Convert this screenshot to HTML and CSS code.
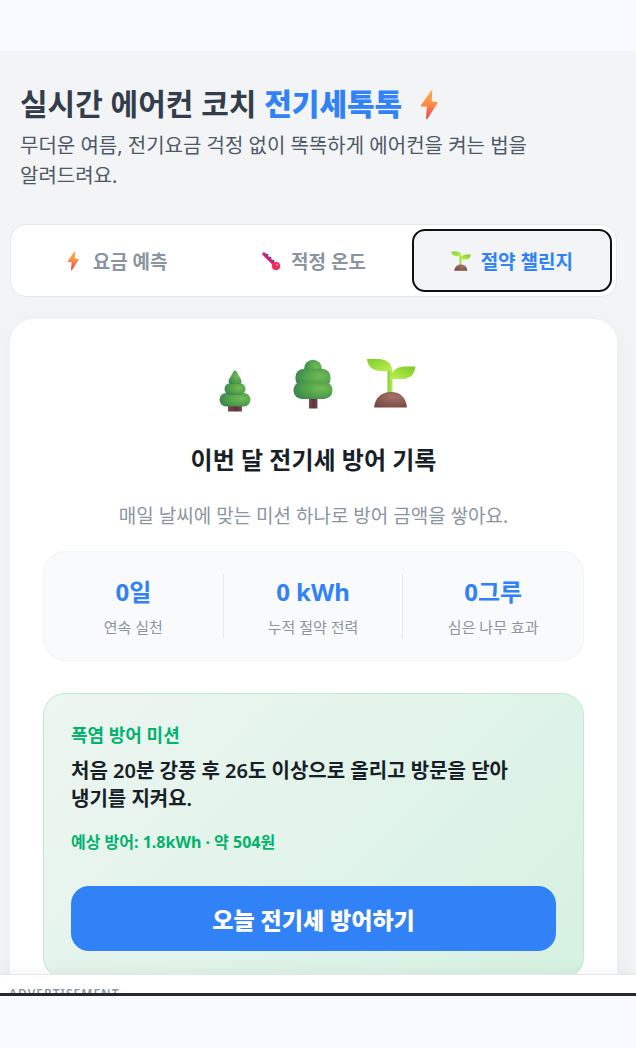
FILE: index.html
```
<!DOCTYPE html>
<html lang="ko">

<head>
    <meta charset="utf-8">
    <meta name="viewport" content="width=device-width, initial-scale=1.0">
    <title>전기세톡톡</title>
    <link rel="stylesheet" href="styles.css">
</head>

<body>

    <!-- shared icons -->
    <svg class="defs" width="0" height="0" aria-hidden="true">
        <defs>
            <linearGradient id="boltFill" x1="0" y1="0" x2="0" y2="1">
                <stop offset="0" stop-color="#fbb040" />
                <stop offset="0.5" stop-color="#fd8a46" />
                <stop offset="1" stop-color="#f4384f" />
            </linearGradient>
            <linearGradient id="leafFill" x1="0" y1="0" x2="1" y2="1">
                <stop offset="0" stop-color="#7fd02b" />
                <stop offset="1" stop-color="#bdf04f" />
            </linearGradient>
            <linearGradient id="leafFillRight" x1="0" y1="1" x2="1" y2="0">
                <stop offset="0" stop-color="#c0f250" />
                <stop offset="1" stop-color="#79c92a" />
            </linearGradient>
            <linearGradient id="stemFill" x1="0" y1="0" x2="1" y2="0">
                <stop offset="0" stop-color="#84cf35" />
                <stop offset="1" stop-color="#b9f04f" />
            </linearGradient>
            <radialGradient id="soilFill" cx="0.6" cy="0.3" r="0.8">
                <stop offset="0" stop-color="#a4706b" />
                <stop offset="1" stop-color="#77493f" />
            </radialGradient>
            <radialGradient id="treeFill" cx="0.7" cy="0.4" r="0.7">
                <stop offset="0" stop-color="#72bb55" />
                <stop offset="0.6" stop-color="#52a24b" />
                <stop offset="1" stop-color="#3f8852" />
            </radialGradient>
            <linearGradient id="trunkFill" x1="0" y1="0" x2="1" y2="0">
                <stop offset="0" stop-color="#7b4b4e" />
                <stop offset="0.6" stop-color="#5c3238" />
                <stop offset="1" stop-color="#7b4b52" />
            </linearGradient>
            <symbol id="bolt" viewBox="0 0 18 30">
                <path fill="url(#boltFill)" d="M11.3.5 1 15.2q-.7 1.3.8 1.3h5L6.1 28.4q.2 1.5 1.3.3L17.4 13.2q.6-1.4-.8-1.4h-4.9L12.3.9q-.1-1.1-1-.4Z" />
            </symbol>
            <symbol id="sprout" viewBox="0 0 50 50">
                <path fill="url(#stemFill)" d="M21.500 12h5v24h-5z" />
                <path fill="url(#leafFill)" d="M1 1h13q11 1 12.500 12H14Q2 12 1 1Z" />
                <path fill="url(#leafFillRight)" d="M49.500 8.500H37q-11 1-13 12.500h15q9.500-2 10.500-12.500Z" />
                <path fill="url(#soilFill)" d="M8 49.500q2-15 16.500-15.500T41 49.500Z" />
            </symbol>
            <symbol id="thermometer" viewBox="0 0 20 20">
                <path stroke="#b8dcff" stroke-width="5" stroke-linecap="round" d="m3 3 12 11" />
                <circle cx="15" cy="15" r="4.800" fill="#b8dcff" />
                <path stroke="#e0186f" stroke-width="3" stroke-linecap="round" d="m3 3 12 12" />
                <path stroke="#3b3a78" stroke-width="1.400" d="m5.500 4.500 1.600-1.300M8.500 7.500l1.600-1.300M11.500 10.500l1.600-1.300" />
                <circle cx="15" cy="15" r="4" fill="#f6275a" />
                <circle cx="16" cy="13.800" r="1" fill="#ff93a7" />
            </symbol>
            <symbol id="pine" viewBox="0 0 32 42">
                <path fill="url(#trunkFill)" d="M9 34h14v7.500H9z" />
                <rect x="0.500" y="23" width="31" height="13.500" rx="6.700" fill="url(#treeFill)" />
                <rect x="5.500" y="13" width="21" height="12" rx="6" fill="url(#treeFill)" />
                <path fill="url(#treeFill)" d="M14.500 1.500q1.500-2 3 0L22 9.500q1.500 4-2.500 4.500h-7q-4-.5-2.500-4.500Z" />
            </symbol>
            <symbol id="tree" viewBox="0 0 40 50">
                <path fill="url(#trunkFill)" d="M16 38h8.500v11.500H16z" />
                <circle cx="20" cy="9.500" r="8.800" fill="url(#treeFill)" />
                <rect x="2.500" y="10" width="35" height="18" rx="8" fill="url(#treeFill)" />
                <rect x="0.500" y="22.500" width="39" height="17.500" rx="8.500" fill="url(#treeFill)" />
            </symbol>
        </defs>
    </svg>

    <main class="screen">
        <div class="content">

            <header>
                <h1>실시간 에어컨 코치 <span class="brand">전기세톡톡</span> <svg class="title-bolt" aria-hidden="true"><use href="#bolt" /></svg></h1>
                <p>무더운 여름, 전기요금 걱정 없이 똑똑하게 에어컨을 켜는 법을 알려드려요.</p>
            </header>

            <nav>
                <button type="button"><svg class="tab-icon" aria-hidden="true"><use href="#bolt" /></svg>요금 예측</button>
                <button type="button"><svg class="tab-icon" aria-hidden="true"><use href="#thermometer" /></svg>적정 온도</button>
                <button type="button" class="valgt"><svg class="tab-icon" aria-hidden="true"><use href="#sprout" /></svg>절약 챌린지</button>
            </nav>

            <section class="card">
                <div class="forest">
                    <svg class="pine" aria-hidden="true"><use href="#pine" /></svg>
                    <svg class="tree" aria-hidden="true"><use href="#tree" /></svg>
                    <svg class="sprout" aria-hidden="true"><use href="#sprout" /></svg>
                </div>
                <h2>이번 달 전기세 방어 기록</h2>
                <p class="intro">매일 날씨에 맞는 미션 하나로 방어 금액을 쌓아요.</p>

                <div class="stats">
                    <div class="stat">
                        <strong>0일</strong>
                        <span>연속 실천</span>
                    </div>
                    <div class="stat">
                        <strong>0 kWh</strong>
                        <span>누적 절약 전력</span>
                    </div>
                    <div class="stat">
                        <strong>0그루</strong>
                        <span>심은 나무 효과</span>
                    </div>
                </div>

                <article class="mission">
                    <h3>폭염 방어 미션</h3>
                    <p class="task">처음 20분 강풍 후 26도 이상으로 올리고 방문을 닫아 냉기를 지켜요.</p>
                    <p class="saving">예상 방어: 1.8kWh · 약 504원</p>
                    <button type="button" class="defend">오늘 전기세 방어하기</button>
                </article>
            </section>

        </div>

        <aside class="ad">ADVERTISEMENT</aside>
    </main>

</body>

</html>
```
FILE: styles.css
```
* {
    box-sizing: border-box;
}

body {
    display: flex;
    flex-direction: column;
    height: 100vh;
    margin: 0;
    padding: 51px 0 52px;
    background-color: #f8faff;
    color: #191f28;
    font-family: "Noto Sans", "Noto Sans CJK KR", sans-serif;
    word-break: keep-all;
}

h1,
h2,
h3,
p {
    margin: 0;
}

button {
    border: none;
    font-family: inherit;
    cursor: pointer;
}

.defs {
    position: absolute;
}

.screen {
    display: flex;
    flex-direction: column;
    flex: 1;
    min-height: 0;
    background-color: #f2f4f6;
    border-bottom: 3px solid #262a2d;
}

.content {
    flex: 1;
    min-height: 0;
    overflow: hidden;
    padding: 32px 19px 0 10px;
}

/* header */
header {
    padding: 0 10px;
}

h1 {
    color: #333d4b;
    font-size: 30px;
    line-height: 42px;
    font-weight: 700;
}

.brand {
    color: #3182f6;
    font-weight: 900;
}

.title-bolt {
    width: 18px;
    height: 30px;
    margin-left: 10px;
    vertical-align: -5px;
}

header p {
    margin-top: 6px;
    color: #4e5968;
    font-size: 20px;
    line-height: 30px;
}

/* tabs */
nav {
    display: grid;
    grid-template-columns: repeat(3, 1fr);
    margin-top: 33px;
    padding: 5px;
    background-color: white;
    border: 1px solid #e5e8eb;
    border-radius: 16px;
}

nav button {
    display: flex;
    align-items: center;
    justify-content: center;
    gap: 10px;
    height: 61px;
    background-color: transparent;
    border-radius: 12px;
    color: #8b95a1;
    font-size: 19px;
    font-weight: 700;
}

nav .valgt {
    background-color: #f2f4f6;
    color: #3182f6;
    outline: 2px solid #101010;
    outline-offset: -1px;
}

.tab-icon {
    width: 20px;
    height: 20px;
}

/* card */
.card {
    margin-top: 22px;
    padding: 39px 33px 33px;
    background-color: white;
    border-radius: 24px;
    box-shadow: 0 4px 24px rgba(0, 0, 0, 0.04);
    text-align: center;
}

.forest {
    display: flex;
    justify-content: center;
    align-items: flex-start;
    height: 54px;
    padding-left: 8px;
}

.pine {
    width: 32px;
    height: 42px;
    margin-top: 12px;
}

.tree {
    width: 40px;
    height: 50px;
    margin: 1px 33px 0 42px;
}

.sprout {
    width: 50px;
    height: 50px;
}

h2 {
    margin-top: 30px;
    font-size: 24px;
    line-height: 36px;
}

.intro {
    margin-top: 24px;
    color: #8b95a1;
    font-size: 19px;
    line-height: 28px;
}

.stats {
    display: grid;
    grid-template-columns: repeat(3, 1fr);
    margin-top: 21px;
    padding: 22px 0;
    background-color: #f9fafb;
    border: 1px solid #f2f4f6;
    border-radius: 22px;
}

.stat {
    display: flex;
    flex-direction: column;
    gap: 6px;
}

.stat:not(:last-child) {
    border-right: 1px solid #e5e8eb;
}

.stat strong {
    color: #3182f6;
    font-size: 24px;
    line-height: 36px;
}

.stat span {
    color: #8b95a1;
    font-size: 15px;
    line-height: 22px;
}

/* mission */
.mission {
    margin-top: 32px;
    padding: 27px;
    background: linear-gradient(135deg, #edf6f1, #d6f1e2);
    border: 1px solid #bfead2;
    border-radius: 22px;
    text-align: left;
}

.mission h3 {
    color: #03b26c;
    font-size: 18px;
    line-height: 28px;
}

.task {
    margin-top: 8px;
    font-size: 20px;
    line-height: 28px;
    font-weight: 600;
}

.saving {
    margin-top: 17px;
    color: #03b26c;
    font-size: 16px;
    line-height: 24px;
    font-weight: 700;
}

.defend {
    display: block;
    width: 100%;
    height: 65px;
    margin-top: 32px;
    background-color: #3182f6;
    border-radius: 18px;
    color: white;
    font-size: 23px;
    font-weight: 800;
}

/* ad strip, cut off by the screen edge */
.ad {
    z-index: 1;
    height: 19px;
    overflow: hidden;
    padding: 10px 9px 0;
    background-color: white;
    border-top: 1px solid #e5e8eb;
    box-shadow: 0 -4px 16px rgba(0, 0, 0, 0.04);
    color: #8b95a1;
    font-size: 12px;
    line-height: 18px;
    font-weight: 600;
    letter-spacing: 1px;
}
```
